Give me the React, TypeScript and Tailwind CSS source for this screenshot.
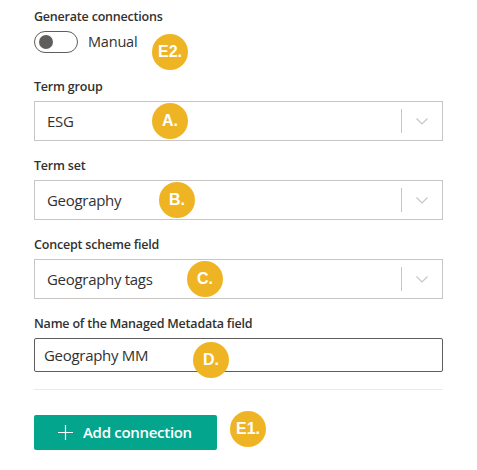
import React from "react";

const font = "font-['Segoe_UI','Open_Sans','Noto_Sans',sans-serif]";
const labelCls =
  "h-[20px] text-[12.5px] font-semibold leading-[20px] tracking-[-0.2px] text-[#323130]";

function Badge({ label, className }: { label: string; className: string }) {
  return (
    <div
      className={`absolute flex h-[36px] w-[36px] items-center justify-center rounded-full bg-[#efb423] font-['Liberation_Sans',Arial,sans-serif] text-[16px] font-bold text-white ${className}`}
    >
      {label}
    </div>
  );
}

function Chevron() {
  return (
    <svg width="12" height="7" viewBox="0 0 12 7" fill="none">
      <path d="M0.5 0.5 L6 6 L11.5 0.5" stroke="#c8c6c4" strokeWidth="1.2" />
    </svg>
  );
}

function Dropdown({
  label,
  value,
  badge,
  badgeLeft,
}: {
  label: string;
  value: string;
  badge: string;
  badgeLeft: string;
}) {
  return (
    <div className="flex flex-col gap-[4px]">
      <div className={labelCls}>{label}</div>
      <div className="relative flex h-[40px] items-center border border-[#c8c6c4] bg-white pl-[12px]">
        <span className="flex-1 text-[15px] tracking-[-0.3px] text-[#323130]">{value}</span>
        <div className="h-[24px] w-px bg-[#c8c6c4]" />
        <div className="flex w-[40px] items-center justify-center">
          <Chevron />
        </div>
        <Badge label={badge} className={`top-[1px] ${badgeLeft}`} />
      </div>
    </div>
  );
}

export default function App() {
  return (
    <div className={`h-[470px] w-[477px] bg-white pl-[34px] pr-[34px] pt-[7px] ${font}`}>
      <div className={labelCls}>Generate connections</div>
      <div className="relative mt-[4px] flex items-center gap-[10px]">
        <div className="flex h-[22px] w-[44px] items-center rounded-full border border-[#605e5c] pl-[4px]">
          <div className="h-[14px] w-[14px] rounded-full bg-[#605e5c]" />
        </div>
        <span className="text-[14.5px] tracking-[-0.2px] text-[#323130]">Manual</span>
        <Badge label="E2." className="left-[118px] top-[3px]" />
      </div>

      <div className="mt-[24px] flex flex-col gap-[15px]">
        <Dropdown label="Term group" value="ESG" badge="A." badgeLeft="left-[117px]" />
        <Dropdown label="Term set" value="Geography" badge="B." badgeLeft="left-[124px]" />
        <Dropdown
          label="Concept scheme field"
          value="Geography tags"
          badge="C."
          badgeLeft="left-[152px]"
        />
        <div className="flex flex-col gap-[4px]">
          <div className={labelCls}>Name of the Managed Metadata field</div>
          <div className="relative flex h-[34px] items-center rounded-[2px] border border-[#605e5c] pl-[9px]">
            <span className="text-[15px] tracking-[-0.3px] text-[#323130]">Geography MM</span>
            <Badge label="D." className="left-[158px] top-[3px]" />
          </div>
        </div>
      </div>

      <div className="mt-[17px] h-px bg-[#edebe9]" />

      <div className="relative mt-[25px]">
        <button className="flex h-[35px] w-[183px] items-center gap-[10px] rounded-[2px] bg-[#03a58d] pl-[24px] text-[15px] font-semibold tracking-[-0.3px] text-white">
          <svg width="15" height="15" viewBox="0 0 15 15" fill="none">
            <path d="M7.5 0 V15 M0 7.5 H15" stroke="white" strokeWidth="1.2" />
          </svg>
          Add connection
        </button>
        <Badge label="E1." className="left-[196px] top-[-4px]" />
      </div>
    </div>
  );
}
